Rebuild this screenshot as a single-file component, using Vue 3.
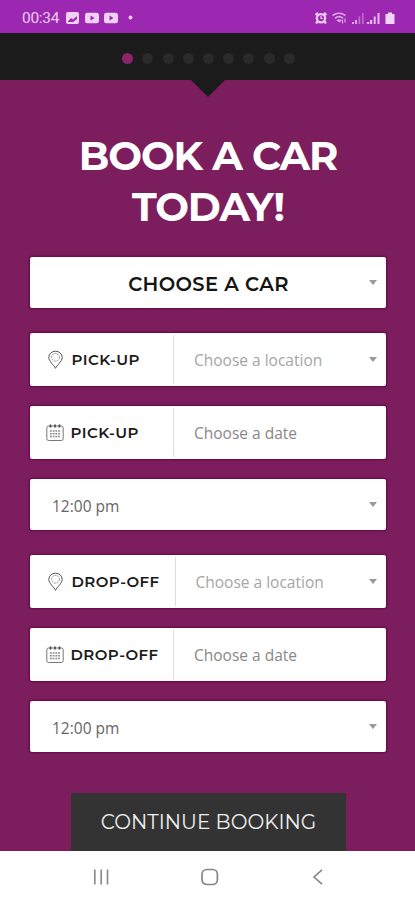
<template>
	<div class="screen">
		<header class="status-bar">
			<span class="clock">00:34</span>
			<svg class="notif" width="70" height="14" viewBox="0 0 70 14">
				<rect x="1" y="1" width="13" height="12" rx="2" fill="#f0d0f6" />
				<path d="M3 10.500 L6 7 L8 8.500 L12 5 V8 L8 11 H3 Z" fill="#9c27b0" />
				<rect x="20" y="1.800" width="14" height="10.500" rx="2.500" fill="#f0d0f6" />
				<path d="M25.500 4.500 L29.500 7 L25.500 9.500 Z" fill="#9c27b0" />
				<rect x="39" y="1.800" width="14" height="10.500" rx="2.500" fill="#f0d0f6" />
				<path d="M44.500 4.500 L48.500 7 L44.500 9.500 Z" fill="#9c27b0" />
				<circle cx="65.500" cy="6.500" r="1.900" fill="#f0d0f6" />
			</svg>
			<svg class="system" width="84" height="16" viewBox="0 0 84 16">
				<!-- alarm -->
				<circle cx="8" cy="8.200" r="5.300" fill="#eecbf5" />
				<path d="M2.500 5 L5 2.800 M13.500 5 L11 2.800 M4.500 11.500 L3 13.500 M11.500 11.500 L13 13.500" stroke="#eecbf5" stroke-width="2.200" />
				<circle cx="8" cy="8.200" r="3" fill="#9c27b0" />
				<path d="M8 6 V8.500 H10" fill="none" stroke="#eecbf5" stroke-width="1.200" />
				<!-- wifi -->
				<g fill="none" stroke="#dda4e8" stroke-width="1.700">
					<path d="M19.500 5.500 Q26 1 32.500 5.500" />
					<path d="M22 8.300 Q26 5 30 8.300" />
					<path d="M24.800 10.500 Q26 9.500 27.500 10.500 L26.500 11.500 Z" />
					<path d="M29.500 9.500 V13.500 M32 8.500 V12.500" stroke-width="1.200" />
				</g>
				<g fill="#dda4e8">
					<rect x="39" y="12" width="2" height="2" />
					<rect x="42" y="10" width="2" height="4" />
					<rect x="45.500" y="6.500" width="1.700" height="7.500" opacity=".6" />
					<rect x="49" y="3" width="1.700" height="11" opacity=".5" />
				</g>
				<g fill="#e6b9ef">
					<rect x="54" y="12" width="2.200" height="2" />
					<rect x="57" y="10" width="2.200" height="4" />
					<rect x="60.700" y="6.500" width="2" height="7.500" />
					<rect x="64.500" y="3" width="2" height="11" />
				</g>
				<path d="M72.500 4 H75 V2.500 H79 V4 H81.500 V14 H72.500 Z" fill="#f3d3f8" />
			</svg>
		</header>

		<div class="slider">
			<span v-for="n in 9" :key="n" class="dot" :class="{ active: n === 1 }"></span>
		</div>

		<main class="booking">
			<svg class="notch" width="36" height="18" viewBox="0 0 36 18">
				<path d="M0 0 H36 L18 18 Z" fill="#1b1b1b" />
			</svg>
			<h1 class="title">BOOK A CAR<br>TODAY!</h1>

			<div class="field choose">
				<span class="choose-text">CHOOSE A CAR</span>
				<i class="caret"></i>
			</div>

			<template v-for="(group, i) in groups" :key="group">
				<div class="field split">
					<div class="label" :class="{ wide: i === 1 }">
						<svg width="18" height="20" viewBox="0 0 18 20" fill="none" stroke="#555">
							<path d="M9.500 18.300 C8.300 15.300 2.800 11.500 2.800 7.400 A6.700 6.200 0 0 1 16.200 7.400 C16.200 11.500 10.700 15.300 9.500 18.300 Z" />
							<circle cx="9.500" cy="7.300" r="3.900" stroke="#888" stroke-width=".9" stroke-dasharray="2 .8" />
						</svg>
						<span>{{ group }}</span>
					</div>
					<span class="placeholder light">Choose a location</span>
					<i class="caret"></i>
				</div>
				<div class="field split">
					<div class="label date">
						<svg width="18" height="18" viewBox="0 0 18 18" fill="none" stroke="#777">
							<rect x=".8" y="2" width="16.400" height="14.500" rx="1.800" />
							<path d="M4.500 .5 V3.500 M9 .5 V3.500 M13.500 .5 V3.500" stroke="#444" stroke-width="1.600" />
							<path d="M4 7 H14 M4 9.700 H14 M4 12.400 H14" stroke="#888" stroke-width="1.500" stroke-dasharray="1.800 .9" />
						</svg>
						<span>{{ group }}</span>
					</div>
					<span class="placeholder">Choose a date</span>
				</div>
				<div class="field time">
					<span>12:00 pm</span>
					<i class="caret"></i>
				</div>
			</template>

			<button class="continue">CONTINUE BOOKING</button>
		</main>

		<nav class="nav-bar">
			<svg width="18" height="18" viewBox="0 0 18 18" stroke="#8c8c8c" stroke-width="1.700">
				<path d="M2.800 1.500 V16.500 M9.200 1.500 V16.500 M15.500 1.500 V16.500" />
			</svg>
			<svg width="18" height="18" viewBox="0 0 18 18" fill="none" stroke="#858585" stroke-width="1.700">
				<rect x="1" y="1.500" width="15.400" height="15" rx="4.800" />
			</svg>
			<svg width="18" height="18" viewBox="0 0 18 18" fill="none" stroke="#858585" stroke-width="1.600">
				<path d="M13 1.800 L5 9 L13 16.200" />
			</svg>
		</nav>
	</div>
</template>

<script setup>
// both halves of the form share the same three fields
const groups = ['PICK-UP', 'DROP-OFF']
</script>

<style>
body {
	margin: 0;
	background: #fff;
}
</style>

<style scoped>
.screen {
	width: 415px;
	height: 900px;
	display: flex;
	flex-direction: column;
	overflow: hidden;
	font-family: Montserrat, Inter, sans-serif;
}

.status-bar {
	height: 33px;
	flex: none;
	box-sizing: border-box;
	padding: 2px 18px 0 22px;
	display: flex;
	align-items: center;
	background: #9c27b0;
}

.clock {
	width: 43px;
	font: 15.5px/18px Roboto, sans-serif;
	letter-spacing: -0.3px;
	color: #efcdf5;
}

.system {
	margin-left: auto;
}

.slider {
	height: 47px;
	flex: none;
	display: flex;
	justify-content: center;
	align-items: center;
	gap: 9.2px;
	padding: 3px 0 0 2px;
	box-sizing: border-box;
	background: #1b1b1b;
}

.dot {
	width: 11px;
	height: 11px;
	border-radius: 50%;
	background: #2a2a2a;
}

.dot.active {
	background: #8b2469;
}

.booking {
	position: relative;
	height: 771px;
	flex: none;
	box-sizing: border-box;
	padding: 51px 29px 0 30px;
	background: #7c1e5d;
}

.notch {
	position: absolute;
	top: -1px;
	left: 190px;
}

.title {
	margin: 0;
	height: 126px;
	text-align: center;
	font-size: 40px;
	font-weight: 700;
	line-height: 50.5px;
	letter-spacing: -1.1px;
	color: #fff;
	white-space: nowrap;
}

.field {
	height: 51px;
	box-sizing: border-box;
	display: flex;
	align-items: center;
	margin-bottom: 25px;
	padding-right: 9px;
	border-radius: 2px;
	background: #fff;
	box-shadow: 0 0 2px 1px #650747;
	font-family: "Open Sans", sans-serif;
	font-size: 15.5px;
	color: #666;
}

.choose {
	position: relative;
	justify-content: center;
	padding-right: 0;
}

.choose-text {
	font: 600 19.5px/24px Montserrat, Inter, sans-serif;
	letter-spacing: 0.4px;
	color: #151515;
	padding: 2px 0 0 1px;
}

.choose .caret {
	position: absolute;
	right: 9px;
}

.caret {
	margin-left: auto;
	border: 4.5px solid transparent;
	border-top: 5px solid #999;
	border-bottom: 0;
}

.split {
	height: 53px;
	margin-bottom: 20px;
}

.label {
	width: 144px;
	height: 49px;
	box-sizing: border-box;
	border-right: 1px solid #ddd;
	padding-left: 16px;
	display: flex;
	align-items: center;
	gap: 7.5px;
	font: 600 15px/18px Montserrat, Inter, sans-serif;
	letter-spacing: 0.45px;
	color: #1a1a1a;
	white-space: nowrap;
}

.label.wide {
	width: 146px;
}

.label.date {
	gap: 6.5px;
}

.placeholder {
	padding: 1px 0 0 20px;
	color: #888;
}

.placeholder.light {
	color: #a5a5a5;
}

.wide + .placeholder {
	padding-left: 19.5px;
}

.time {
	padding-left: 22px;
}

.time span {
	padding-top: 2px;
}

.continue {
	display: block;
	width: 275px;
	height: 58px;
	margin: 41px 0 0 41px;
	padding: 0;
	border: 0;
	background: #333;
	color: #eee;
	font: 400 20px/24px Montserrat, Inter, sans-serif;
	white-space: nowrap;
}

.nav-bar {
	height: 49px;
	flex: none;
	box-sizing: border-box;
	padding: 2px 88px 0 92px;
	display: flex;
	align-items: center;
	justify-content: space-between;
	background: #fff;
}
</style>
